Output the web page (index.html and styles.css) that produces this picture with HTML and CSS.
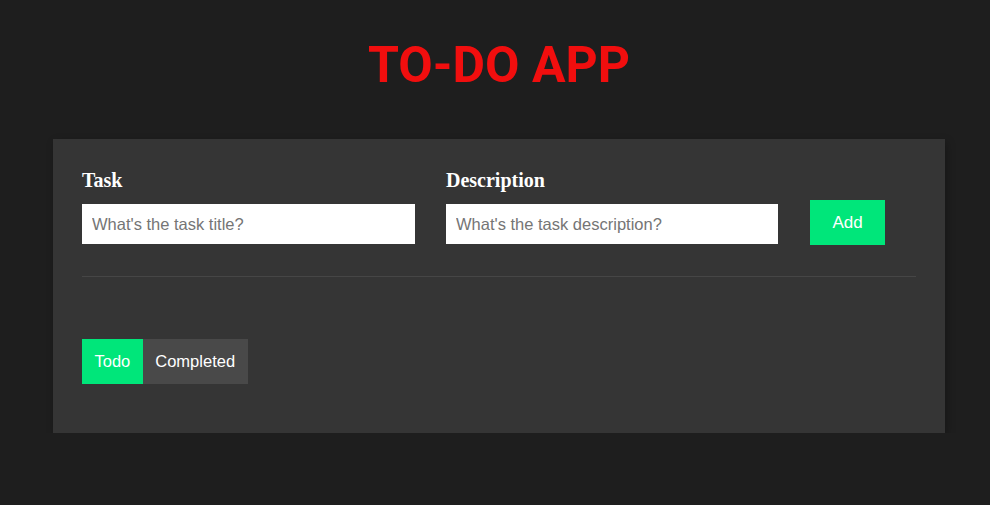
FILE: index.html
```html
<!DOCTYPE html>
<html lang="en">
<head>
<meta charset="utf-8">
<title>To-Do App</title>
<link rel="stylesheet" href="styles.css">
</head>
<body>
<div class="app">
  <h1 class="title">TO-DO APP</h1>
  <div class="card">
    <div class="input-row">
      <div class="field">
        <label class="label" for="task">Task</label>
        <input class="text-input" id="task" type="text" placeholder="What's the task title?">
      </div>
      <div class="field">
        <label class="label" for="desc">Description</label>
        <input class="text-input text-input-desc" id="desc" type="text" placeholder="What's the task description?">
      </div>
      <button class="add-btn" type="button">Add</button>
    </div>
    <div class="divider"></div>
    <div class="tabs">
      <button class="tab tab-active" type="button">Todo</button>
      <button class="tab" type="button">Completed</button>
    </div>
  </div>
</div>
</body>
</html>
```
FILE: styles.css
```css
html, body {
  margin: 0;
  padding: 0;
  background: #1e1e1e;
}

body {
  font-family: "Liberation Sans", Arial, sans-serif;
}

.app {
  margin: 0 45px 0 53px;
  padding-top: 35px;
}

.title {
  margin: 0;
  text-align: center;
  color: #f10e0e;
  font-family: Roboto, "Liberation Sans", sans-serif;
  font-weight: 700;
  font-size: 50px;
  line-height: 60px;
  height: 60px;
}

.card {
  margin-top: 44px;
  background: #353535;
  padding: 30px 29px 49px 29px;
  box-shadow: 2px 3px 8px rgba(0, 0, 0, 0.25);
}

.input-row {
  display: flex;
  align-items: flex-end;
  gap: 31px;
}

.field {
  display: flex;
  flex-direction: column;
}

.label {
  font-family: "Liberation Serif", "Times New Roman", serif;
  font-weight: 700;
  font-size: 20px;
  line-height: 23px;
  color: #ffffff;
  margin-bottom: 12px;
}

.text-input {
  box-sizing: border-box;
  width: 333px;
  height: 40px;
  border: none;
  outline: none;
  padding: 0 10px;
  margin: 0 0 1px 0;
  background: #ffffff;
  font-family: "Liberation Sans", Arial, sans-serif;
  font-size: 16.5px;
  color: #333;
}

.text-input-desc {
  width: 332px;
}

.text-input::placeholder {
  color: #757575;
}

.add-btn {
  width: 75px;
  height: 45px;
  margin-left: 1px;
  border: none;
  background: #00e67a;
  color: #ffffff;
  font-family: "Liberation Sans", Arial, sans-serif;
  font-size: 17px;
  padding: 0;
  cursor: pointer;
}

.divider {
  margin-top: 31px;
  height: 1px;
  background: #464646;
}

.tabs {
  display: flex;
  margin-top: 62px;
}

.tab {
  height: 45px;
  border: none;
  padding: 0 12.5px;
  background: #494949;
  color: #ffffff;
  font-family: "Liberation Sans", Arial, sans-serif;
  font-size: 16.5px;
  cursor: pointer;
}

.tab-active {
  background: #00e67a;
}
```
